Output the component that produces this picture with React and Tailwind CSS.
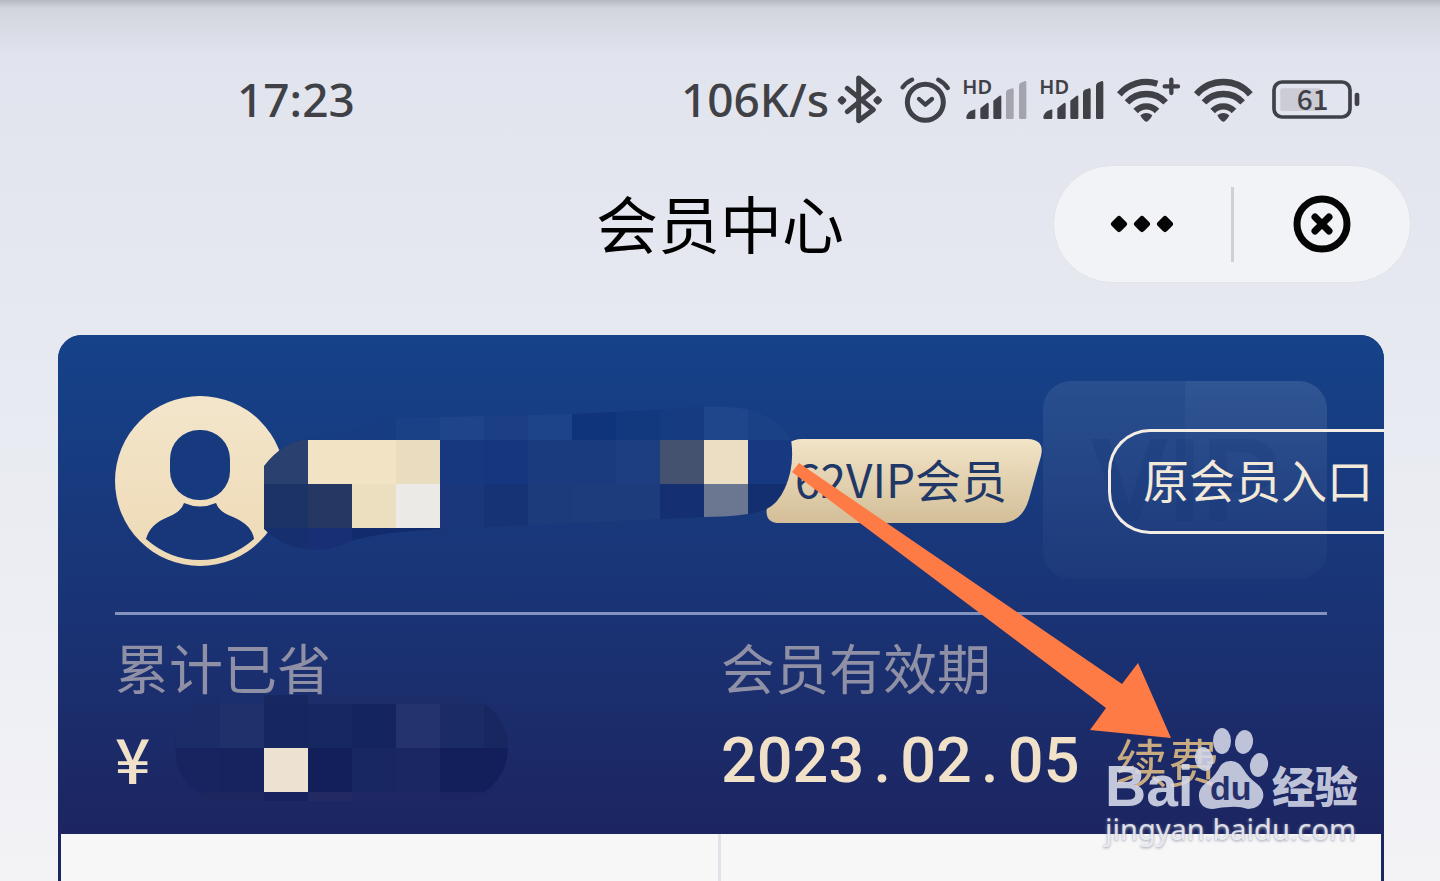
import React from "react";

// 44px blocks: [column, row, colour], clipped to the brush stroke
const nameBlocks = [
  [0, 0, "#173c81"], [1, 0, "#173c81"], [2, 0, "#173c81"], [3, 0, "#1a4085"],
  [4, 0, "#1f4488"], [5, 0, "#1b3f82"], [6, 0, "#1d4388"], [7, 0, "#0f347b"],
  [8, 0, "#12387d"], [9, 0, "#173b80"], [10, 0, "#1f458b"], [11, 0, "#1a4186"],
  [0, 1, "#2a406f"], [1, 1, "#f2e3c5"], [2, 1, "#f2e3c5"], [3, 1, "#eadcbf"],
  [4, 1, "#17377e"], [5, 1, "#163680"], [6, 1, "#1a3b7e"], [7, 1, "#1a3b7e"],
  [8, 1, "#1d3e80"], [9, 1, "#445270"], [10, 1, "#ecdec3"], [11, 1, "#173981"],
  [0, 2, "#1c3368"], [1, 2, "#263764"], [2, 2, "#ebdfbf"], [3, 2, "#ebeae6"],
  [4, 2, "#1a377c"], [5, 2, "#163376"], [6, 2, "#1b3b7b"], [7, 2, "#1c3c7c"],
  [8, 2, "#1c3c7c"], [9, 2, "#142f72"], [10, 2, "#6b7690"], [11, 2, "#142f70"],
  [0, 3, "#16306f"], [1, 3, "#182f75"], [2, 3, "#112b6c"], [3, 3, "#112b6c"],
];

const savedBlocks = [
  [0, 0, "#1b2e6c"], [1, 0, "#1b2f6e"], [2, 0, "#16285f"], [3, 0, "#1b2e6a"],
  [4, 0, "#1b2e6a"], [5, 0, "#1b2e6a"], [6, 0, "#1b2e6a"], [7, 0, "#1b2e6a"],
  [0, 1, "#1b2d68"], [1, 1, "#1f306a"], [2, 1, "#16265f"], [3, 1, "#172860"],
  [4, 1, "#14245d"], [5, 1, "#24336c"], [6, 1, "#1b2b66"], [7, 1, "#18275f"],
  [0, 2, "#172460"], [1, 2, "#17235f"], [2, 2, "#ede1d2"], [3, 2, "#121f5a"],
  [4, 2, "#192760"], [5, 2, "#1a2760"], [6, 2, "#121f5b"], [7, 2, "#121f5b"],
  [0, 3, "#1d265e"], [1, 3, "#1d265e"], [2, 3, "#18225e"], [3, 3, "#222963"],
  [4, 3, "#1f2862"], [5, 3, "#1f2862"], [6, 3, "#1c255f"], [7, 3, "#1c255f"],
];

function Blocks({ blocks }) {
  return blocks.map(([col, row, fill]) => (
    <rect key={`${col}-${row}`} x={col * 44} y={row * 44} width="45" height="45" fill={fill} />
  ));
}

function BluetoothIcon() {
  return (
    <svg width="46" height="50" viewBox="0 0 138 150" fill="none" stroke="#3f4147" strokeWidth="15" strokeLinecap="round" strokeLinejoin="round" className="mr-1">
      <path d="M31 43 L109 107 L65 140 V12 L109 49 L31 113" />
      <path d="M15 74 L20 79 L15 84 L10 79Z M122 74 L127 79 L122 84 L117 79Z" fill="#3f4147" />
    </svg>
  );
}

function AlarmIcon() {
  return (
    <svg width="50" height="47" viewBox="0 0 150 141" fill="none" stroke="#3f4147" strokeWidth="13" strokeLinecap="round" strokeLinejoin="round">
      <circle cx="76" cy="79" r="54" strokeWidth="15" />
      <path d="M8 34 Q19 18 36 11 M115 11 Q132 19 143 36" />
      <path d="M57 69 L76 86 L96 69" />
    </svg>
  );
}

function SignalIcon({ weak }) {
  const tail = weak ? "#a3a4ae" : "#3f4147";
  return (
    <svg width="64" height="42" viewBox="0 0 192 126" fill="#3f4147" className="overflow-visible">
      <text x="-2" y="48" fontFamily="Noto Sans" fontWeight="600" fontSize="60">HD</text>
      <path d="M10 119 Q10 108 22 99 L37 94 V119 Q37 123 33 123 H14 Q10 123 10 119Z" />
      <path d="M52 91 L72 75 Q77 73 77 79 V119 Q77 123 73 123 H56 Q52 123 52 119Z" />
      <path d="M91 68 L110 53 Q115 51 115 57 V119 Q115 123 111 123 H95 Q91 123 91 119Z" />
      <path fill={tail} d="M129 44 Q129 38 134 35 L148 31 Q152 30 152 36 V119 Q152 123 148 123 H133 Q129 123 129 119Z" />
      <path fill={tail} d="M168 24 Q168 17 173 14 L186 9 Q190 8 190 14 V119 Q190 123 186 123 H172 Q168 123 168 119Z" />
    </svg>
  );
}

function WifiIcon({ plus }) {
  return (
    <svg width={plus ? 64 : 59} height="47" viewBox={plus ? "0 0 192 141" : "0 0 177 141"} fill="none" stroke="#3f4147" strokeWidth="19">
      <path d={plus ? "M7 55 A107 107 0 0 1 121 23" : "M7 55 A107 107 0 0 1 169 55"} />
      <path d="M30 79 A80 80 0 0 1 146 79" />
      <path d="M56 105 A44 44 0 0 1 120 105" />
      <path d="M70 118 Q88 104 106 118 Q104 125 93 135 Q88 139 83 135 Q72 125 70 118Z" fill="#3f4147" stroke="none" />
      {plus && <path d="M163 11 V51 M143 31 H183" strokeWidth="13" strokeLinecap="round" />}
    </svg>
  );
}

function BatteryIcon() {
  return (
    <svg width="88" height="39" viewBox="0 0 264 117" className="ml-1.5 overflow-visible">
      <rect x="25" y="25" width="122" height="68" rx="6" fill="#cbccd5" />
      <rect x="6" y="6" width="228" height="105" rx="24" fill="none" stroke="#3f4147" strokeWidth="11" />
      <rect x="248" y="38" width="14" height="40" rx="6" fill="#3f4147" />
      <text x="74" y="91" fontFamily="Noto Sans CJK SC" fontWeight="500" fontSize="84" fill="#3f4147">61</text>
    </svg>
  );
}

function Avatar() {
  return (
    <svg width="170" height="170" viewBox="0 0 170 170" className="shrink-0">
      <defs>
        <linearGradient id="avatarFill" x1="0" y1="0" x2="0" y2="1">
          <stop offset="0" stopColor="#f3e6cb" />
          <stop offset="1" stopColor="#eed9b5" />
        </linearGradient>
      </defs>
      <circle cx="85" cy="85" r="85" fill="url(#avatarFill)" />
      <rect x="55" y="34" width="60" height="70" rx="29" fill="#17397d" />
      <path d="M69 107 Q85 114 101 107 Q104 116 118 121 Q137 129 139 143 Q115 164 85 164 Q55 164 31 143 Q35 128 53 121 Q66 116 69 107Z" fill="#18367a" />
    </svg>
  );
}

function Watermark() {
  return (
    <div className="pointer-events-none absolute top-[727px] right-[78px] w-[257px] text-[#d5d8e8]/90">
      <div className="relative flex h-[84px] items-end pr-1 font-['Liberation_Sans']">
        <span className="text-[57px] leading-[50px] font-bold">Bai</span>
        <svg width="70" height="82" viewBox="0 0 70 82" className="absolute bottom-[2px] left-[91px] overflow-visible">
          <g fill="#d5d8e8" fillOpacity="0.88">
            <ellipse cx="26" cy="14" rx="9" ry="13" />
            <ellipse cx="48" cy="15" rx="9" ry="12" transform="rotate(10 48 15)" />
            <ellipse cx="8" cy="32" rx="9" ry="12" transform="rotate(-12 8 32)" />
            <ellipse cx="63" cy="38" rx="9" ry="12" transform="rotate(10 63 38)" />
            <path d="M34 34 Q42 33 48 43 Q52 50 60 56 Q69 63 67 71 Q64 82 52 82 Q43 79 34 80 Q26 80 17 82 Q4 82 3 70 Q2 62 10 56 Q17 51 22 43 Q26 34 34 34Z" />
          </g>
          <text x="14" y="73" fontFamily="Liberation Sans" fontWeight="700" fontSize="34" fill="#26306c">du</text>
        </svg>
        <span className="ml-auto font-['Noto_Sans_CJK_SC'] text-[43px] leading-[54px] font-black">经验</span>
      </div>
      <div className="font-['Noto_Sans'] text-[29px] leading-[36px] text-[#eef0f6]/90 [text-shadow:0_1px_3px_#9a9cad]">
        jingyan.baidu.com
      </div>
    </div>
  );
}

export default function App() {
  return (
    <div className="relative flex min-h-screen flex-col overflow-hidden bg-linear-to-b from-[#e0e3ed] via-[#e9ebf2] to-[#f3f3f6] font-['Noto_Sans_CJK_SC',sans-serif]">
      {/* shadow along the top edge */}
      <div className="absolute inset-x-0 top-0 h-14 bg-linear-to-b from-[#b6b8c0] via-[#d3d5de] via-15% to-transparent" />

      {/* STATUS BAR */}
      <div className="relative mt-[69px] flex h-[60px] items-center pr-20 pl-[237px] text-[#3f4147]">
        <span className="font-['Noto_Sans'] text-[46px] leading-[60px] font-medium">17:23</span>
        <div className="ml-auto flex items-center gap-[13px]">
          <div className="flex items-center gap-2">
            <span className="font-['Noto_Sans'] text-[46px] leading-[60px] font-medium">106K/s</span>
            <BluetoothIcon />
          </div>
          <AlarmIcon />
          <SignalIcon weak />
          <SignalIcon />
          <WifiIcon plus />
          <WifiIcon />
          <BatteryIcon />
        </div>
      </div>

      {/* TITLE BAR */}
      <header className="relative mt-9 grid grid-cols-[1fr_auto_1fr] items-center px-[29px]">
        <h1 className="col-start-2 pb-1 text-[62px] leading-[72px] text-black">会员中心</h1>
        <div className="flex h-[118px] w-[358px] items-center justify-self-end rounded-full border border-[#e3e3e8] bg-[#f2f3f7]">
          <button aria-label="更多" className="flex h-full flex-1 items-center justify-center">
            <svg width="64" height="18" viewBox="0 0 64 18" stroke="#050505" strokeWidth="6" strokeLinejoin="round" fill="#050505">
              <path d="M9 4 L14 9 L9 14 L4 9Z M32 4 L37 9 L32 14 L27 9Z M55 4 L60 9 L55 14 L50 9Z" />
            </svg>
          </button>
          <div className="h-[75px] w-[3px] bg-[#cfd0d4]" />
          <button aria-label="关闭" className="flex h-full flex-1 items-center justify-center">
            <svg width="58" height="58" viewBox="0 0 58 58" fill="none" stroke="#050505">
              <circle cx="29" cy="29" r="25" strokeWidth="7" />
              <path d="M22 22 L36 36 M36 22 L22 36" strokeWidth="7" strokeLinecap="round" />
            </svg>
          </button>
        </div>
      </header>

      {/* MEMBER CARD */}
      <main className="relative mt-[52px] mr-14 ml-[58px] flex flex-1 flex-col overflow-hidden rounded-t-[24px] bg-[#1c2663]">
        <section className="relative bg-linear-to-b from-[#154289] via-[#193577] via-50% to-[#1c2561] px-[57px] pt-[62px] pb-[43px]">
          <div aria-hidden="true" className="absolute top-[46px] right-[57px] flex h-[198px] w-[284px] items-center justify-center overflow-hidden rounded-[28px] bg-linear-to-b from-white/8 to-white/2">
            <div className="absolute inset-y-0 right-0 w-1/2 bg-linear-to-b from-white/4 to-transparent to-60%" />
            <span className="font-['Liberation_Sans'] text-[118px] leading-none font-bold text-[#143375]/25">VIP</span>
          </div>

          <div className="relative flex h-[168px] items-center">
            <Avatar />
            <div className="relative ml-auto flex h-[84px] w-[276px] shrink-0 items-center pb-1.5 pl-[29px]">
              <svg width="276" height="84" viewBox="0 0 276 84" className="absolute inset-0">
                <defs>
                  <linearGradient id="badgeFill" x1="0" y1="0" x2="0" y2="1">
                    <stop offset="0" stopColor="#f2e4c7" />
                    <stop offset="1" stopColor="#d3be98" />
                  </linearGradient>
                </defs>
                <path d="M36 0 H262 Q279 1 275 17 L263 60 Q256 84 234 84 H14 Q-2 84 1 68 L14 18 Q19 0 36 0Z" fill="url(#badgeFill)" />
              </svg>
              <span className="relative text-[46px] leading-[56px] whitespace-nowrap text-[#1f3868]">62VIP会员</span>
            </div>
            <button className="-mr-[57px] ml-[66px] h-[105px] w-[276px] shrink-0 rounded-l-[42px] border-[3px] border-r-0 border-[#f3ede3] pb-1.5 pl-8 text-left text-[46px] leading-[60px] whitespace-nowrap text-[#f3e9d8]">
              原会员入口
            </button>

            {/* hidden account name */}
            <svg width="532" height="160" viewBox="-2 1 532 160" className="absolute top-0 left-[147px]">
              <clipPath id="nameStroke">
                <path d="M0 70 Q18 46 44 43 Q90 34 132 22 L308 18 L396 14 Q460 7 486 14 Q516 22 527 43 Q531 70 521 92 Q514 108 501 114 Q480 121 440 121 L180 133 Q110 136 85 146 Q60 159 26 150 Q8 142 -2 131 L0 131Z" />
              </clipPath>
              <g clipPath="url(#nameStroke)">
                <Blocks blocks={nameBlocks} />
              </g>
            </svg>
          </div>

          <hr className="mt-[47px] border-0 border-t-[3px] border-[#8493bd]" />

          <div className="grid grid-cols-2 pt-6 text-[#8f90a6]">
            <div>
              <h2 className="text-[54px] leading-[56px]">累计已省</h2>
              <p className="mt-8 text-[62px] leading-[60px] font-medium text-[#f1e1c8]">¥</p>
            </div>
            <div>
              <h2 className="text-[54px] leading-[56px]">会员有效期</h2>
              <div className="mt-9 flex items-center whitespace-nowrap">
                <p className="font-['Roboto'] text-[63px] leading-[60px] font-medium text-[#f1e1c8]">
                  2023<span className="inline-block w-9 text-center">.</span>02
                  <span className="inline-block w-9 text-center">.</span>05
                </p>
                <a href="#renew" className="ml-9 text-[52px] leading-[54px] text-[#c9ab80]">续费</a>
              </div>
            </div>
          </div>

          {/* hidden amount */}
          <svg width="334" height="106" viewBox="0 0 334 106" className="absolute top-[360px] left-[116px]">
            <clipPath id="savedStroke">
              <rect width="334" height="106" rx="53" />
            </clipPath>
            <g clipPath="url(#savedStroke)">
              <g transform="translate(2 -35)">
                <rect x="-2" y="0" width="3" height="150" fill="#1a2a66" />
                <Blocks blocks={savedBlocks} />
              </g>
            </g>
          </svg>
        </section>

        <section className="mx-[3px] grid flex-1 grid-cols-2 bg-[#f7f7f8]">
          <div className="border-r-[3px] border-[#e0e4ea]" />
          <div />
        </section>
      </main>

      <svg width="380" height="277" viewBox="0 0 380 277" className="pointer-events-none absolute top-[462px] left-[792px]" fill="#ff7b45">
        <path d="M7 1 L330 222 L346 201 L379 276 L298 268 L314 246 L0 10Z" />
      </svg>
      <Watermark />
    </div>
  );
}
